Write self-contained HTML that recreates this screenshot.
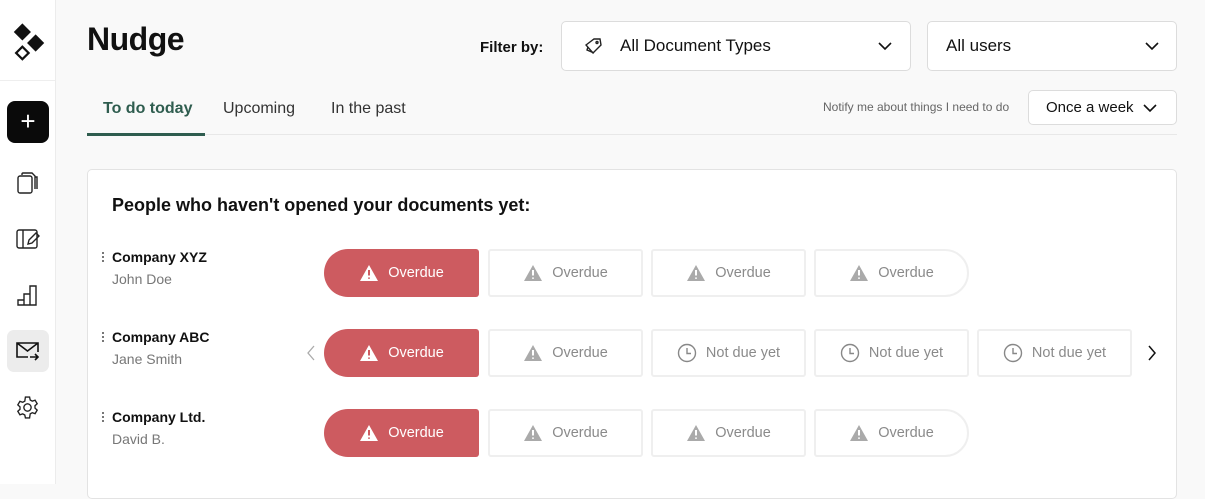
<!DOCTYPE html>
<html><head><style>
*{box-sizing:border-box;margin:0;padding:0}
body{width:1205px;height:484px;overflow:hidden;background:#f9f9f9;font-family:"Liberation Sans",sans-serif;color:#111;position:relative}
.side{position:absolute;left:0;top:0;width:56px;height:484px;background:#fff;border-right:1px solid #ececec}
.abs{position:absolute}
.sel{border:1px solid #dcdcdc;border-radius:5px;background:#fff;position:absolute;height:50px;font-size:17px;display:flex;align-items:center}
.card{position:absolute;left:87px;top:169px;width:1090px;height:330px;background:#fff;border:1px solid #e3e3e3;border-radius:5px}
.pill{position:absolute;width:155px;height:48px;border:2px solid #efefef;border-radius:3px;background:#fff;display:flex;align-items:center;justify-content:center;font-size:14.5px;color:#8a8a8a;gap:9px}
.red{background:#cd5b60;border:none;color:#fff;border-radius:24px 3px 3px 24px}
.last{border-radius:3px 24px 24px 3px}
.co{position:absolute;left:112px;font-size:14px;font-weight:bold}
.nm{position:absolute;left:112px;font-size:14px;color:#777}
.dots{position:absolute;left:102px;width:2px;height:12px;background:radial-gradient(circle,#555 0.9px,transparent 1.1px) 0 0/2px 4px}
</style></head><body>
<div class="side">
 <svg class="abs" style="left:12px;top:22px" width="34" height="42" viewBox="0 0 30 38"><rect x="3.5" y="3.5" width="11" height="11" transform="rotate(45 9 9)" fill="#111"/><rect x="15.5" y="13.5" width="11" height="11" transform="rotate(45 21 19)" fill="#111"/><rect x="5" y="24" width="8" height="8" transform="rotate(45 9 28)" fill="none" stroke="#111" stroke-width="2"/></svg>
 <div class="abs" style="left:0;top:80px;width:55px;height:1px;background:#eee"></div>
 <div class="abs" style="left:7px;top:101px;width:42px;height:42px;background:#0a0a0a;border-radius:8px;color:#fff;font-size:26px;text-align:center;line-height:40px">+</div>
 <svg class="abs" style="left:16px;top:171px" width="24" height="24" viewBox="0 0 24 24" fill="none" stroke="#222" stroke-width="1.4"><rect x="2" y="5" width="14" height="17" rx="2"/><path d="M6 4V3a1 1 0 0 1 1-1h9l3 3v13"/><path d="M19 6h2v12"/></svg>
 <svg class="abs" style="left:16px;top:228px" width="24" height="22" viewBox="0 0 24 22" fill="none" stroke="#222" stroke-width="1.4"><rect x="1" y="2" width="20" height="18" rx="2"/><path d="M7 2v18M12 16l1-4 7-7 3 3-7 7z"/></svg>
 <svg class="abs" style="left:16px;top:283px" width="24" height="24" viewBox="0 0 24 24" fill="none" stroke="#222" stroke-width="1.4"><path d="M2 22v-5h6v5zM8 22V11h6v11zM14 22V3h6v19z"/></svg>
 <div class="abs" style="left:7px;top:330px;width:42px;height:42px;background:#ececec;border-radius:7px"></div>
 <svg class="abs" style="left:16px;top:340px" width="24" height="22" viewBox="0 0 24 22" fill="none" stroke="#111" stroke-width="1.6"><path d="M12 17H1V3h21v9M1 3l10.5 8L22 3M14 17h8m-3-3 3 3-3 3"/></svg>
 <svg class="abs" style="left:15px;top:395px" width="25" height="25" viewBox="0 0 24 24" fill="none" stroke="#222" stroke-width="1.3"><circle cx="12" cy="12" r="3.5"/><path d="M10 2h4l.6 2.8 2 1.1 2.7-.9 2 3.4-2.1 1.9v2.3l2.1 1.9-2 3.4-2.7-.9-2 1.1L14 22h-4l-.6-2.8-2-1.1-2.7.9-2-3.4 2.1-1.9v-2.3L2.7 9.5l2-3.4 2.7.9 2-1.1z"/></svg>
</div>
<div class="abs" style="left:87px;top:21px;font-size:32px;font-weight:bold;letter-spacing:-0.5px">Nudge</div>
<div class="abs" style="left:480px;top:39px;font-size:15px;font-weight:bold">Filter by:</div>
<div class="sel" style="left:561px;top:21px;width:350px;padding-left:58px">All Document Types
 <svg class="abs" style="left:22px;top:15px" width="20" height="18" viewBox="0 0 20 18" fill="none" stroke="#222" stroke-width="1.4"><path d="M2 8l8-6h6l1 6-8 8z"/><circle cx="13" cy="5.5" r="1"/><path d="M4 10l-1 3 7 3"/></svg>
 <svg class="abs" style="left:316px;top:20px" width="14" height="9" viewBox="0 0 14 9" fill="none" stroke="#111" stroke-width="1.6"><path d="M1 1l6 6 6-6"/></svg></div>
<div class="sel" style="left:927px;top:21px;width:250px;padding-left:18px">All users
 <svg class="abs" style="left:217px;top:20px" width="14" height="9" viewBox="0 0 14 9" fill="none" stroke="#111" stroke-width="1.6"><path d="M1 1l6 6 6-6"/></svg></div>
<div class="abs" style="left:87px;top:134px;width:1090px;height:1px;background:#e8e8e8"></div>
<div class="abs" style="left:87px;top:133px;width:118px;height:3px;background:#2f5d4f"></div>
<div class="abs" style="left:103px;top:100px;font-size:16px;font-weight:bold;color:#2f5d4f">To do today</div>
<div class="abs" style="left:223px;top:100px;font-size:16px;color:#333">Upcoming</div>
<div class="abs" style="left:331px;top:100px;font-size:16px;color:#333">In the past</div>
<div class="abs" style="left:823px;top:100px;font-size:12px;color:#666">Notify me about things I need to do</div>
<div class="sel" style="left:1028px;top:90px;width:149px;height:35px;font-size:15px;padding-left:17px">Once a week
 <svg class="abs" style="left:114px;top:13px" width="14" height="9" viewBox="0 0 14 9" fill="none" stroke="#111" stroke-width="1.6"><path d="M1 1l6 6 6-6"/></svg></div>
<div class="card"></div>
<div class="abs" style="left:112px;top:195px;font-size:18px;font-weight:bold">People who haven't opened your documents yet:</div>

<div class="dots" style="top:251px"></div><div class="co" style="top:249px">Company XYZ</div><div class="nm" style="top:271px">John Doe</div>
<div class="dots" style="top:331px"></div><div class="co" style="top:329px">Company ABC</div><div class="nm" style="top:351px">Jane Smith</div>
<div class="dots" style="top:411px"></div><div class="co" style="top:409px">Company Ltd.</div><div class="nm" style="top:431px">David B.</div>

<svg width="0" height="0" style="position:absolute"><defs>
<symbol id="w" viewBox="0 0 20 18"><path d="M10 1L19 17H1z" fill="currentColor"/><path d="M10 6v5.5M10 13.5v1.2" stroke="var(--c)" stroke-width="2"/></symbol>
<symbol id="c" viewBox="0 0 20 20"><circle cx="10" cy="10" r="8.5" fill="none" stroke="currentColor" stroke-width="1.4"/><path d="M10 5v5.5h4" fill="none" stroke="currentColor" stroke-width="1.4"/></symbol>
</defs></svg>

<div class="pill red" style="left:324px;top:249px;--c:#cd5b60"><svg width="20" height="18"><use href="#w"/></svg>Overdue</div>
<div class="pill" style="left:488px;top:249px;--c:#fff"><svg width="20" height="18" style="color:#aaa"><use href="#w"/></svg>Overdue</div>
<div class="pill" style="left:651px;top:249px;--c:#fff"><svg width="20" height="18" style="color:#aaa"><use href="#w"/></svg>Overdue</div>
<div class="pill last" style="left:814px;top:249px;--c:#fff"><svg width="20" height="18" style="color:#aaa"><use href="#w"/></svg>Overdue</div>

<svg class="abs" style="left:306px;top:345px" width="10" height="16" viewBox="0 0 10 16" fill="none" stroke="#aaa" stroke-width="1.3"><path d="M8 1L2 8l6 7"/></svg>
<div class="pill red" style="left:324px;top:329px;--c:#cd5b60"><svg width="20" height="18"><use href="#w"/></svg>Overdue</div>
<div class="pill" style="left:488px;top:329px;--c:#fff"><svg width="20" height="18" style="color:#aaa"><use href="#w"/></svg>Overdue</div>
<div class="pill" style="left:651px;top:329px"><svg width="20" height="20" style="color:#888"><use href="#c"/></svg>Not due yet</div>
<div class="pill" style="left:814px;top:329px"><svg width="20" height="20" style="color:#888"><use href="#c"/></svg>Not due yet</div>
<div class="pill" style="left:977px;top:329px"><svg width="20" height="20" style="color:#888"><use href="#c"/></svg>Not due yet</div>
<svg class="abs" style="left:1147px;top:345px" width="10" height="16" viewBox="0 0 10 16" fill="none" stroke="#111" stroke-width="1.5"><path d="M2 1l6 7-6 7"/></svg>

<div class="pill red" style="left:324px;top:409px;--c:#cd5b60"><svg width="20" height="18"><use href="#w"/></svg>Overdue</div>
<div class="pill" style="left:488px;top:409px;--c:#fff"><svg width="20" height="18" style="color:#aaa"><use href="#w"/></svg>Overdue</div>
<div class="pill" style="left:651px;top:409px;--c:#fff"><svg width="20" height="18" style="color:#aaa"><use href="#w"/></svg>Overdue</div>
<div class="pill last" style="left:814px;top:409px;--c:#fff"><svg width="20" height="18" style="color:#aaa"><use href="#w"/></svg>Overdue</div>
</body></html>
